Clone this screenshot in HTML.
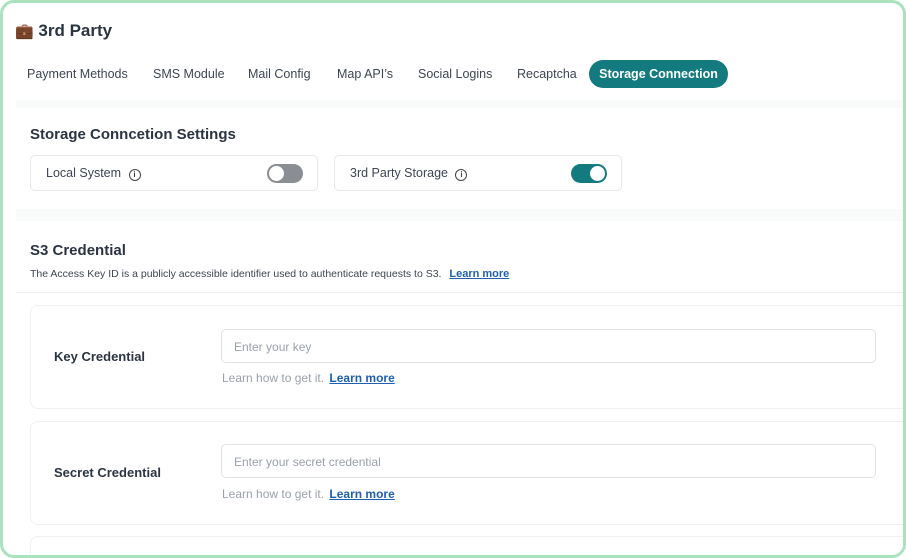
<!DOCTYPE html>
<html><head><style>
*{box-sizing:border-box;margin:0;padding:0}
html,body{width:906px;height:558px;overflow:hidden}
body{background:#fff;font-family:"Liberation Sans",sans-serif;color:#334257}
.frame{position:absolute;left:0;top:0;width:906px;height:558px;border:3px solid #a9e2bd;border-radius:14px;background:#fff;overflow:hidden}
.abs{position:absolute}
.title{left:12px;top:18px;font-size:17px;font-weight:bold;color:#2b3442}
.tab{top:64px;font-size:12.5px;color:#3d4552}
.pill{left:586px;top:57px;width:139px;height:28px;border-radius:14px;background:#137a7f;color:#fff;font-weight:bold;font-size:12.5px;line-height:28px;text-align:center}
.band{left:13px;right:0;background:#f9fafa}
.h2{font-size:15px;font-weight:bold;color:#2b3442}
.box{height:36px;border:1px solid #e4e7eb;border-radius:5px;background:#fff}
.box span{position:absolute;left:15px;top:10px;font-size:12.5px;color:#3d4552}
.tog{position:absolute;top:8px;width:36px;height:19px;border-radius:10px}
.tog i{position:absolute;top:2px;width:15px;height:15px;border-radius:50%;background:#fff}
.card{left:27px;right:0;border:1px solid #eef0f2;border-right:none;border-radius:8px 0 0 8px;background:#fff}
.lbl{font-size:13px;font-weight:bold;color:#2b3442}
.inp{left:218px;width:655px;height:34px;border:1px solid #dfe3e8;border-radius:5px;font-size:12px;color:#9aa1ab;padding:10px 12px}
.help{font-size:12px;color:#9aa1ab}
.help a{color:#1f5fb0;font-weight:bold;text-decoration:underline;margin-left:2px}
.info{display:inline-block;width:12px;height:12px;border:1.3px solid #444;border-radius:50%;font-size:8px;text-align:center;line-height:10px;font-weight:bold;vertical-align:0px;margin-left:4px}
</style></head><body>
<div class="frame">
<div class="abs" style="left:286px;top:-3px;width:112px;height:3px;background:#5cc2a0"></div>
<div class="abs title"><span style="font-size:15px">💼</span> 3rd Party</div>
<div class="abs tab" style="left:24px">Payment Methods</div>
<div class="abs tab" style="left:150px">SMS Module</div>
<div class="abs tab" style="left:245px">Mail Config</div>
<div class="abs tab" style="left:334px">Map API’s</div>
<div class="abs tab" style="left:415px">Social Logins</div>
<div class="abs tab" style="left:514px">Recaptcha</div>
<div class="abs pill">Storage Connection</div>
<div class="abs band" style="top:97px;height:8px"></div>
<div class="abs h2" style="left:27px;top:123px">Storage Conncetion Settings</div>
<div class="abs box" style="left:27px;top:152px;width:288px"><span>Local System <b class="info">i</b></span><div class="tog" style="left:236px;background:#8a8d91"><i style="left:2px"></i></div></div>
<div class="abs box" style="left:331px;top:152px;width:288px"><span>3rd Party Storage <b class="info">i</b></span><div class="tog" style="left:236px;background:#137a7f"><i style="right:2px"></i></div></div>
<div class="abs band" style="top:206px;height:12px"></div>
<div class="abs h2" style="left:27px;top:239px">S3 Credential</div>
<div class="abs" style="left:27px;top:265px;font-size:10.5px;color:#3d4552">The Access Key ID is a publicly accessible identifier used to authenticate requests to S3. <a style="color:#1f5fb0;font-weight:bold;text-decoration:underline;font-size:11px;margin-left:5px">Learn more</a></div>
<div class="abs" style="left:13px;right:0;top:289px;height:1px;background:#eceef0"></div>
<div class="abs card" style="top:302px;height:104px"></div>
<div class="abs lbl" style="left:51px;top:346px">Key Credential</div>
<div class="abs inp" style="top:326px">Enter your key</div>
<div class="abs help" style="left:219px;top:368px">Learn how to get it. <a>Learn more</a></div>
<div class="abs card" style="top:418px;height:104px"></div>
<div class="abs lbl" style="left:51px;top:462px">Secret Credential</div>
<div class="abs inp" style="top:441px">Enter your secret credential</div>
<div class="abs help" style="left:219px;top:484px">Learn how to get it. <a>Learn more</a></div>
<div class="abs card" style="top:533px;height:30px"></div>
</div>
</body></html>
